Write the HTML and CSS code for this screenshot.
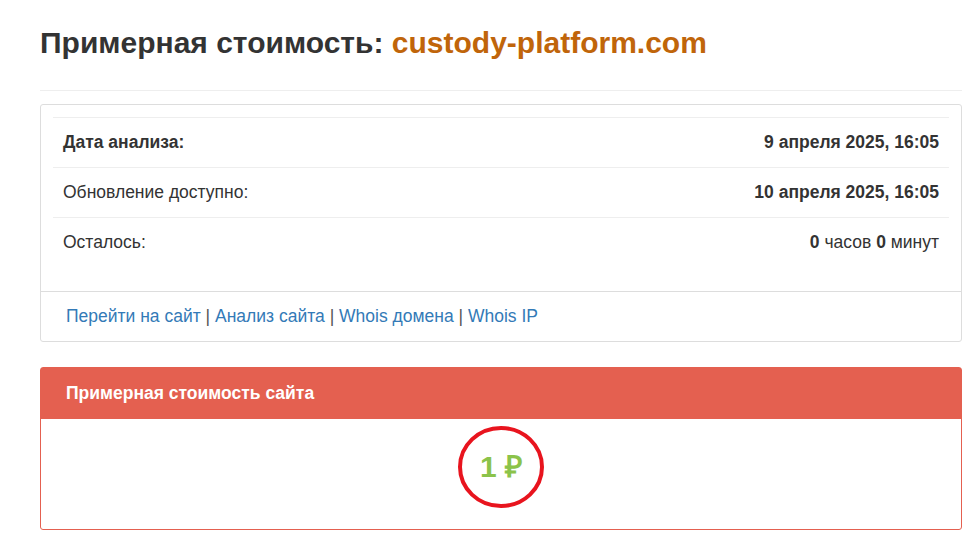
FILE: index.html
```html
<!DOCTYPE html>
<html lang="ru">
<head>
<meta charset="utf-8">
<link rel="stylesheet" href="styles.css">
</head>
<body>
<div class="container">
  <h1 class="title">Примерная стоимость: <span class="domain">custody-platform.com</span></h1>
  <hr class="sep">
  <div class="panel">
    <div class="panel-body">
      <table class="info">
        <tr><td class="label strong">Дата анализа:</td><td class="value strong">9 апреля 2025, 16:05</td></tr>
        <tr><td class="label">Обновление доступно:</td><td class="value strong">10 апреля 2025, 16:05</td></tr>
        <tr><td class="label">Осталось:</td><td class="value"><b>0</b> часов <b>0</b> минут</td></tr>
      </table>
    </div>
    <div class="panel-footer">
      <a href="#">Перейти на сайт</a> | <a href="#">Анализ сайта</a> | <a href="#">Whois домена</a> | <a href="#">Whois IP</a>
    </div>
  </div>
  <div class="panel panel-red">
    <div class="panel-heading">Примерная стоимость сайта</div>
    <div class="price-body">
      <div class="price">
        <span class="price-text">1 ₽</span>
        <svg class="circle" width="88" height="84" viewBox="0 0 88 84"><ellipse cx="44" cy="42" rx="41" ry="39" fill="none" stroke="#e8141e" stroke-width="4"/></svg>
      </div>
    </div>
  </div>
</div>
</body>
</html>
```
FILE: styles.css
```css
html, body { margin: 0; padding: 0; background: #fff; }
body { font-family: "Liberation Sans", Arial, sans-serif; color: #333; font-size: 16px; line-height: 1.5; }
.container { padding: 0 12px 0 40px; }
.title { margin: 0; padding-top: 24px; font-size: 30px; line-height: 38px; font-weight: bold; color: #333; }
.domain { color: #c0650a; }
.sep { border: 0; border-top: 1px solid #eee; margin: 28px 0 13px; }
.panel { border: 1px solid #ddd; border-radius: 3px; background: #fff; }
.panel-body { padding: 12px 12px 0; }
.info { width: 100%; border-collapse: collapse; margin-bottom: 24px; font-size: 17.5px; }
.info td { border-top: 1px solid #eee; padding: 12px 10px 12px; line-height: 25px; }
.strong { font-weight: bold; }
.value { text-align: right; }
.panel-footer { border-top: 1px solid #ddd; padding: 12px 25px 12px; font-size: 17.5px; line-height: 25px; color: #555; }
.panel-footer a { color: #337ab7; text-decoration: none; }
.panel-red { margin-top: 25px; border-color: #e46050; }
.panel-heading { background: #e46050; color: #fff; font-weight: bold; font-size: 17.5px; padding: 13px 25px; line-height: 25px; }
.price-body { height: 110px; box-sizing: border-box; padding-bottom: 14px; display: flex; align-items: center; justify-content: center; }
.price { position: relative; font-size: 30px; font-weight: bold; color: #8bc34a; line-height: 34px; }
.circle { position: absolute; left: 50%; top: 50%; transform: translate(-50%, -50%); }
```
